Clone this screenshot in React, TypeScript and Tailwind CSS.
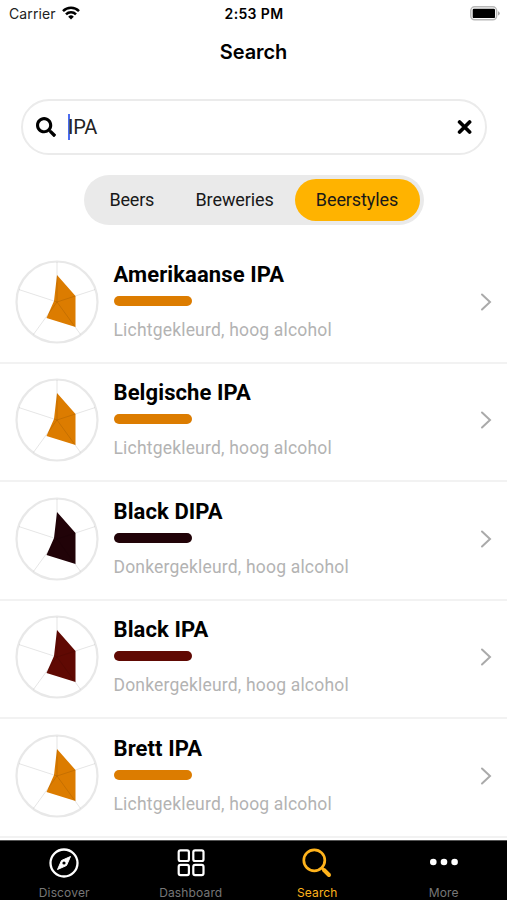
import { clsx } from 'clsx';
import { FaSearch } from 'react-icons/fa';

interface BeerStyle {
  name: string;
  description: string;
  color: string;
}

const beerStyles: BeerStyle[] = [
  { name: 'Amerikaanse IPA', description: 'Lichtgekleurd, hoog alcohol', color: '#dc7c00' },
  { name: 'Belgische IPA', description: 'Lichtgekleurd, hoog alcohol', color: '#dc7c00' },
  { name: 'Black DIPA', description: 'Donkergekleurd, hoog alcohol', color: '#210308' },
  { name: 'Black IPA', description: 'Donkergekleurd, hoog alcohol', color: '#600903' },
  { name: 'Brett IPA', description: 'Lichtgekleurd, hoog alcohol', color: '#dc7c00' },
];

function StatusBar() {
  return (
    <div className="grid h-7 grid-cols-3 items-center pl-[9px] pr-[7px] text-[14px] text-[#222]">
      <div className="-mt-[2px] flex items-center gap-[6px]">
        <span className="tracking-[0.1px]">Carrier</span>
        <svg width="18" height="14" viewBox="0 0 18 14" fill="none" stroke="#000" strokeWidth="2.5">
          <path d="M1 5.1a11.3 11.3 0 0 1 16 0" />
          <path d="M4 8.3a7 7 0 0 1 10 0" />
          <path d="M6.2 10.7a4 4 0 0 1 5.6 0L9 13.5z" fill="#000" stroke="none" />
        </svg>
      </div>
      <span className="-ml-px -mt-[2px] text-center font-semibold tracking-[0.35px] text-black">2:53 PM</span>
      <svg className="-mt-[2px] justify-self-end" width="30" height="15" viewBox="0 0 30 15">
        <rect x="0.8" y="0.8" width="25.8" height="13" rx="3.8" fill="#fff" stroke="#b8b8b8" strokeWidth="1.5" />
        <rect x="2.7" y="2.7" width="22.3" height="9.4" rx="1.2" fill="#000" />
        <path d="M28 5.2a2.2 2.2 0 0 1 0 4.3z" fill="#aaa" />
      </svg>
    </div>
  );
}

function SearchField() {
  return (
    <div className="ml-[21px] mr-5 mt-[31px] flex h-14 items-center rounded-full border-2 border-[#ebebeb] px-[13px]">
      <FaSearch className="size-5" />
      <div className="ml-3 h-[26px] w-[2px] bg-[#4b6cf0]" />
      <span className="-ml-[2px] flex-1 font-['Roboto',sans-serif] text-[20px] tracking-[-0.2px] text-[#222]">IPA</span>
      <svg width="15" height="14" viewBox="0 0 15 14" fill="none" stroke="#000" strokeWidth="3.7">
        <path d="M2.6 2l10 10M12.6 2l-10 10" strokeLinecap="round" />
      </svg>
    </div>
  );
}

function Segments() {
  return (
    <div className="mx-auto mt-5 flex h-[50px] w-[340px] items-center rounded-full bg-[#eaeaea] pl-[26px] pr-1 font-['Roboto',sans-serif] text-[18px] text-[#191919]">
      <span className="-mt-px w-[86px] tracking-[-0.2px]">Beers</span>
      <span className="-mt-px w-[99px] tracking-[-0.1px]">Breweries</span>
      <span className="flex h-[42px] w-[125px] items-center justify-center rounded-full bg-[#ffb300] pb-[2px] tracking-[-0.1px]">
        Beerstyles
      </span>
    </div>
  );
}

function FlavorChart({ color }: { color: string }) {
  return (
    <svg className="shrink-0" width="84" height="84" viewBox="0 0 84 84">
      <circle cx="42" cy="42" r="40.5" fill="#fff" stroke="#e8e8e8" strokeWidth="2.2" />
      <path d="M42 15 L60.5 36 V67 L31.5 58 L39 41z" fill={color} />
      <path
        d="M42 42V2M42 42L80 29.6M42 42L65.5 74.4M42 42L18.5 74.4M42 42L4 29.6"
        stroke="#000"
        strokeOpacity="0.1"
        strokeWidth="1"
      />
    </svg>
  );
}

function StyleRow({ name, description, color }: BeerStyle) {
  return (
    <li className="flex h-[118.5px] items-start border-b-2 border-[#f2f2f2] px-[15px] pt-[14.5px]">
      <FlavorChart color={color} />
      <div className="ml-[14.5px] flex-1 font-['Roboto',sans-serif]">
        <h2 className="mt-px text-[22px] font-bold leading-7 tracking-[0.1px] text-black">{name}</h2>
        <div className="mt-[7px] h-[10px] w-[78px] rounded-full" style={{ backgroundColor: color }} />
        <p className="mt-[12px] text-[17.5px] leading-6 tracking-[0.19px] text-[#b3b3b3]">{description}</p>
      </div>
      <svg className="mt-8" width="12" height="20" viewBox="0 0 12 20" fill="none" stroke="#aaa" strokeWidth="2">
        <path d="M2 2.5l8 7.5-8 7.5" strokeLinecap="round" />
      </svg>
    </li>
  );
}

function TabBar() {
  const tabs = [
    {
      label: 'Discover',
      icon: (
        <>
          <circle cx="16" cy="16" r="13.5" strokeWidth="2.3" />
          <path d="M22.5 9.5L18.5 18.5L9.5 22.5L13.5 13.5z" fill="currentColor" strokeWidth="1" strokeLinejoin="round" />
          <circle cx="16" cy="16" r="1.6" fill="#000" stroke="none" />
        </>
      ),
    },
    {
      label: 'Dashboard',
      icon: (
        <g strokeWidth="2.2">
          <rect x="3.7" y="3.3" width="10.2" height="10.7" rx="1.8" />
          <rect x="18.3" y="3.3" width="10.2" height="10.7" rx="1.8" />
          <rect x="3.7" y="17.9" width="10.2" height="10.2" rx="1.8" />
          <rect x="18.3" y="17.9" width="10.2" height="10.2" rx="1.8" />
        </g>
      ),
    },
    {
      label: 'Search',
      icon: (
        <>
          <circle cx="13.3" cy="13.3" r="10.5" strokeWidth="2.7" />
          <path d="M21 21l1.7 1.7" strokeWidth="2.5" />
          <path d="M23 23l5 5" strokeWidth="4" strokeLinecap="round" />
        </>
      ),
    },
    {
      label: 'More',
      icon: (
        <g fill="currentColor" stroke="none">
          <circle cx="5.3" cy="15" r="3.3" />
          <circle cx="16" cy="15" r="3.3" />
          <circle cx="26.6" cy="15" r="3.3" />
        </g>
      ),
    },
  ];

  return (
    <nav className="grid h-[60px] shrink-0 grid-cols-4 border-t border-[#555] bg-black pl-px">
      {tabs.map((tab) => (
        <div
          key={tab.label}
          className={clsx(
            'flex flex-col items-center pt-[6px]',
            tab.label === 'Search' ? 'text-[#ffb31c]' : 'text-white'
          )}
        >
          <svg width="32" height="32" viewBox="0 0 32 32" fill="none" stroke="currentColor">
            {tab.icon}
          </svg>
          <span
            className={clsx(
              'mt-[6px] text-[12px] leading-4 tracking-[0.15px]',
              tab.label !== 'Search' && 'text-[#777]'
            )}
          >
            {tab.label}
          </span>
        </div>
      ))}
    </nav>
  );
}

export default function App() {
  return (
    <div className="flex h-[900px] w-[507px] flex-col overflow-hidden bg-white font-['Inter',sans-serif]">
      <StatusBar />
      <h1 className="mt-2 text-center text-[20px] font-semibold leading-8 tracking-[-0.1px] text-black">Search</h1>
      <SearchField />
      <Segments />
      <ul className="mt-5 min-h-0 flex-1 overflow-hidden">
        {beerStyles.map((style) => (
          <StyleRow key={style.name} {...style} />
        ))}
      </ul>
      <TabBar />
    </div>
  );
}
